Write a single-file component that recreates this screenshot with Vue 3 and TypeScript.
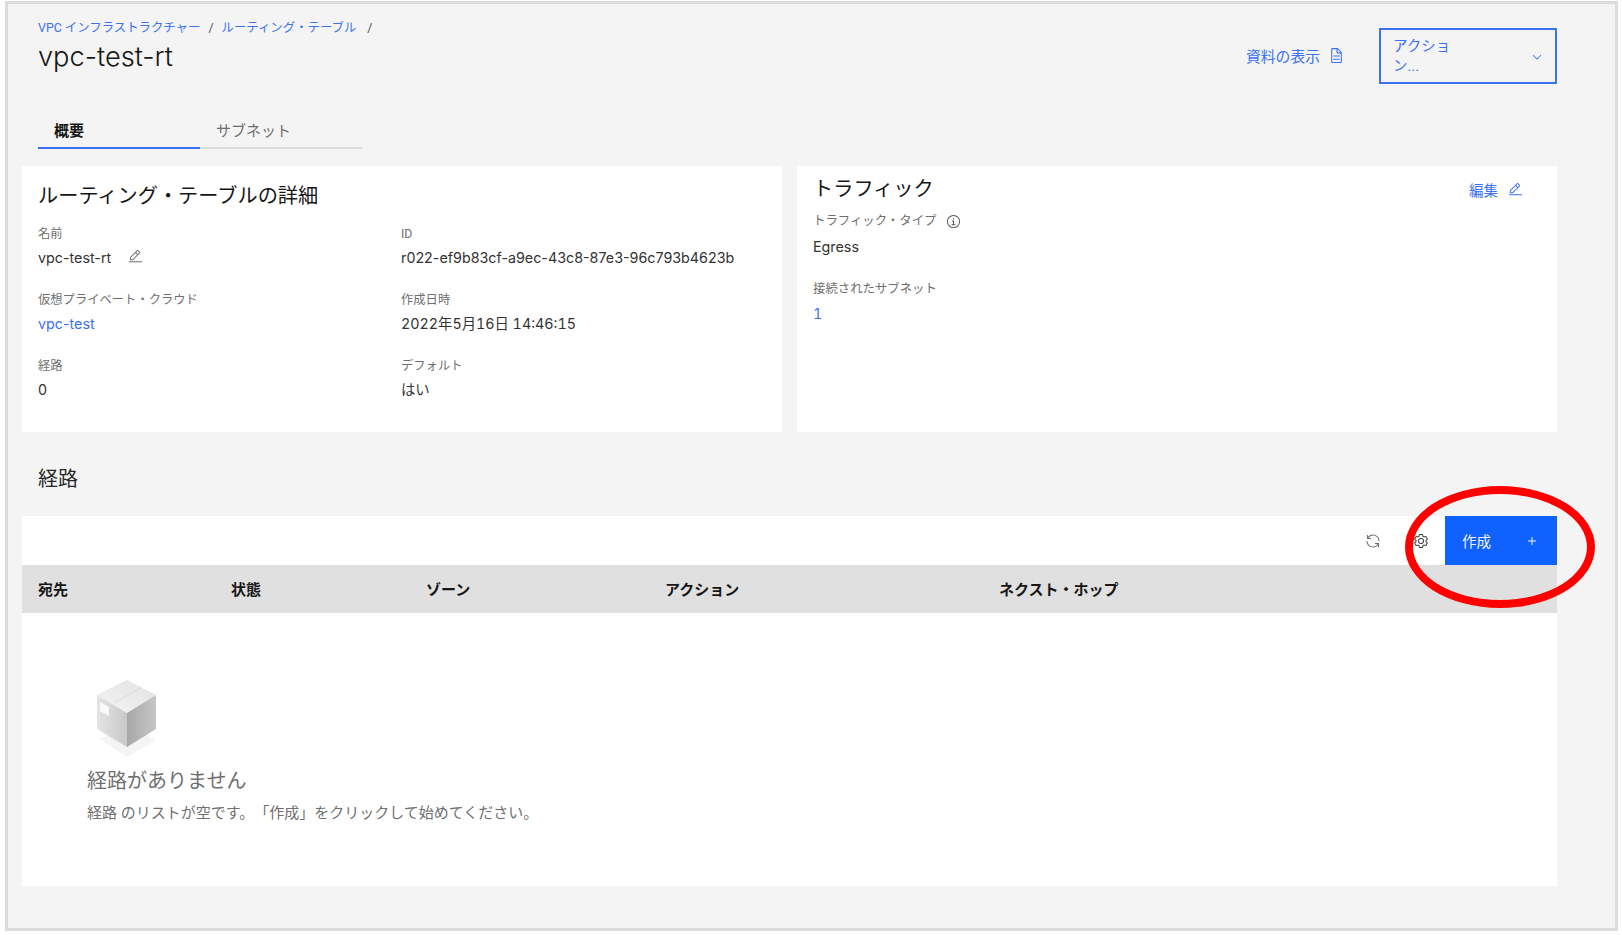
<script setup lang="ts">
interface Field {
  label: string
  value: string
  link?: boolean
  editable?: boolean
  tabular?: boolean
}

const detailFields: Field[] = [
  { label: '名前', value: 'vpc-test-rt', editable: true },
  { label: 'ID', value: 'r022-ef9b83cf-a9ec-43c8-87e3-96c793b4623b' },
  { label: '仮想プライベート・クラウド', value: 'vpc-test', link: true },
  { label: '作成日時', value: '2022年5月16日 14:46:15', tabular: true },
  { label: '経路', value: '0' },
  { label: 'デフォルト', value: 'はい' },
]

const columns = ['宛先', '状態', 'ゾーン', 'アクション', 'ネクスト・ホップ']

const editPath =
  'M2 26h28v2H2zM25.4 9c.8-.8.8-2 0-2.8l-3.6-3.6c-.8-.8-2-.8-2.8 0l-15 15V24h6.4l15-15zm-5-5L24 7.6l-3 3L17.4 7l3-3zM6 22v-3.6l10-10l3.6 3.6l-10 10H6z'
</script>

<template>
  <div class="frame">
    <header class="page-head">
      <div class="head-left">
        <nav class="breadcrumb">
          <a>VPC インフラストラクチャー</a>
          <span class="sep">/</span>
          <a>ルーティング・テーブル</a>
          <span class="sep">/</span>
        </nav>
        <h1 class="title">vpc-test-rt</h1>
      </div>
      <div class="head-right">
        <a class="doc-link">
          資料の表示
          <svg class="doc-icon" viewBox="0 0 32 32" fill="currentColor">
            <path d="M25.7 9.3l-7-7C18.5 2.1 18.3 2 18 2H8C6.9 2 6 2.9 6 4v24c0 1.1.9 2 2 2h16c1.1 0 2-.9 2-2V10C26 9.7 25.9 9.5 25.7 9.3zM18 4.4l5.6 5.6H18V4.4zM24 28H8V4h8v6c0 1.1.9 2 2 2h6V28z" />
            <path d="M10 22H22V24H10zM10 16H22V18H10z" />
          </svg>
        </a>
        <button class="action-select">
          <span class="action-text">アクション...</span>
          <svg class="chevron" viewBox="0 0 32 32" fill="currentColor">
            <path d="M16 22L6 12l1.4-1.4L16 19.2l8.6-8.6L26 12z" />
          </svg>
        </button>
      </div>
    </header>

    <div class="tabs">
      <div class="tab active">概要</div>
      <div class="tab">サブネット</div>
    </div>

    <section class="cards">
      <div class="card">
        <h2 class="card-title">ルーティング・テーブルの詳細</h2>
        <div class="field-grid">
          <div v-for="field in detailFields" :key="field.label" class="field">
            <div class="field-label">{{ field.label }}</div>
            <div class="field-value" :class="{ link: field.link, tabular: field.tabular }">
              {{ field.value }}
              <svg v-if="field.editable" class="edit-icon" viewBox="0 0 32 32" fill="currentColor">
                <path :d="editPath" />
              </svg>
            </div>
          </div>
        </div>
      </div>

      <div class="card traffic">
        <div class="traffic-head">
          <h2 class="card-title">トラフィック</h2>
          <a class="edit-link">
            編集
            <svg class="edit-link-icon" viewBox="0 0 32 32" fill="currentColor">
              <path :d="editPath" />
            </svg>
          </a>
        </div>
        <div class="field-label type-label">
          トラフィック・タイプ
          <svg class="info-icon" viewBox="0 0 32 32" fill="currentColor">
            <path d="M17 22v-8h-4v2h2v6h-3v2h8v-2h-3z" />
            <circle cx="16" cy="10" r="1.5" />
            <path d="M16 30A14 14 0 1 1 30 16 14 14 0 0 1 16 30zm0-26a12 12 0 1 0 12 12A12 12 0 0 0 16 4z" />
          </svg>
        </div>
        <div class="field-value egress">Egress</div>
        <div class="field-label subnet-label">接続されたサブネット</div>
        <div class="field-value link subnet-count tabular">1</div>
      </div>
    </section>

    <h2 class="section-title">経路</h2>

    <section class="routes">
      <div class="toolbar">
        <button class="tool-btn refresh">
          <svg viewBox="0 0 32 32" fill="currentColor">
            <path d="M12 10H6.78A11 11 0 0 1 27 16h2A13 13 0 0 0 6 7.68V4H4v8h8zM20 22h5.22A11 11 0 0 1 5 16H3a13 13 0 0 0 23 8.32V28h2v-8h-8z" />
          </svg>
        </button>
        <button class="tool-btn">
          <svg viewBox="0 0 32 32" fill="currentColor">
            <path d="M27,16.76c0-.25,0-.5,0-.76s0-.51,0-.77l1.92-1.68A2,2,0,0,0,29.3,11L26.94,7a2,2,0,0,0-1.73-1,2,2,0,0,0-.64.1l-2.43.82a11.35,11.35,0,0,0-1.31-.75l-.51-2.52a2,2,0,0,0-2-1.61H13.64a2,2,0,0,0-2,1.61l-.51,2.52a11.48,11.48,0,0,0-1.32.75L7.43,6.06A2,2,0,0,0,6.79,6,2,2,0,0,0,5.06,7L2.7,11a2,2,0,0,0,.41,2.51L5,15.24c0,.25,0,.5,0,.76s0,.51,0,.77L3.11,18.45A2,2,0,0,0,2.7,21L5.06,25a2,2,0,0,0,1.73,1,2,2,0,0,0,.64-.1l2.43-.82a11.35,11.35,0,0,0,1.31.75l.51,2.52a2,2,0,0,0,2,1.61h4.72a2,2,0,0,0,2-1.61l.51-2.52a11.48,11.48,0,0,0,1.32-.75l2.42.82a2,2,0,0,0,.64.1,2,2,0,0,0,1.73-1L29.3,21a2,2,0,0,0-.41-2.51ZM25.21,24l-3.43-1.16a8.86,8.86,0,0,1-2.71,1.57L18.36,28H13.64l-.71-3.55a9.36,9.36,0,0,1-2.7-1.57L6.79,24,4.43,20l2.72-2.4a8.9,8.9,0,0,1,0-3.13L4.43,12,6.79,8l3.43,1.16a8.86,8.86,0,0,1,2.71-1.57L13.64,4h4.72l.71,3.55a9.36,9.36,0,0,1,2.7,1.57L25.21,8,27.57,12l-2.72,2.4a8.9,8.9,0,0,1,0,3.13L27.57,20Z" />
            <path d="M16,22a6,6,0,1,1,6-6A5.94,5.94,0,0,1,16,22Zm0-10a3.91,3.91,0,0,0-4,4,3.91,3.91,0,0,0,4,4,3.91,3.91,0,0,0,4-4A3.91,3.91,0,0,0,16,12Z" />
          </svg>
        </button>
        <button class="create-btn">
          作成
          <svg viewBox="0 0 32 32" fill="currentColor">
            <path d="M17 15V8h-2v7H8v2h7v7h2v-7h7v-2h-7z" />
          </svg>
        </button>
      </div>

      <div class="table-head">
        <div v-for="col in columns" :key="col">{{ col }}</div>
      </div>

      <div class="empty">
        <svg class="box" viewBox="0 0 60 78" width="60" height="78">
          <defs>
            <linearGradient id="boxTop" x1="0" y1="1" x2="1" y2="0">
              <stop offset="0" stop-color="#f4f4f4" />
              <stop offset="1" stop-color="#e2e2e2" />
            </linearGradient>
            <linearGradient id="boxLeft" x1="0" y1="0" x2="1" y2="0">
              <stop offset="0" stop-color="#e4e4e4" />
              <stop offset="1" stop-color="#c8c8c8" />
            </linearGradient>
            <linearGradient id="boxRight" x1="0" y1="0" x2="1" y2="0">
              <stop offset="0" stop-color="#a8a8a8" />
              <stop offset="1" stop-color="#c6c6c6" />
            </linearGradient>
          </defs>
          <path d="M3 59L30 77L59 60L30 46z" fill="#f4f4f4" />
          <path d="M30 0L59 15L30 33L0 15z" fill="url(#boxTop)" />
          <path d="M0 15L30 33V67L0 49z" fill="url(#boxLeft)" />
          <path d="M59 15V49L30 67V33z" fill="url(#boxRight)" />
          <path d="M17 23L45 7" stroke="#d2d2d2" stroke-width="0.6" fill="none" />
          <path d="M3 22L12 27V36L3 31z" fill="#fafafa" />
        </svg>
        <h3 class="empty-title">経路がありません</h3>
        <p class="empty-text">経路 のリストが空です。「作成」をクリックして始めてください。</p>
      </div>

      <div class="callout"></div>
    </section>
  </div>
</template>

<style>
body {
  background: #fff;
}
</style>

<style scoped>
.frame {
  box-sizing: border-box;
  width: 1613px;
  height: 930px;
  margin: 1px 0 0 5px;
  padding: 0 58px 0 14px;
  border: 3px solid #dcdcdc;
  background: #f4f4f4;
  color: #262626;
  font-family: Roboto, "Noto Sans CJK JP", sans-serif;
  font-size: 15px;
}

a {
  color: #3b71f3;
}

.page-head {
  display: flex;
  justify-content: space-between;
  height: 108px;
  padding-left: 16px;
}

.breadcrumb {
  display: flex;
  align-items: center;
  height: 18px;
  margin-top: 15px;
  font-size: 12.4px;
  line-height: 18px;
}

.sep {
  margin: 0 8px;
  color: #525252;
}

.sep:last-child {
  margin-left: 11px;
}

.title {
  margin: 2px 0 0;
  font-family: Inter, "Noto Sans CJK JP", sans-serif;
  font-size: 27.2px;
  font-weight: 300;
  line-height: 36px;
  color: #161616;
}

.head-right {
  display: flex;
  align-items: flex-start;
  margin-top: 24px;
}

.doc-link {
  display: flex;
  align-items: center;
  height: 55px;
  margin-right: 34px;
  font-size: 14.8px;
}

.doc-icon {
  width: 17px;
  height: 17px;
  margin-left: 8px;
}

.action-select {
  display: flex;
  align-items: center;
  justify-content: space-between;
  box-sizing: border-box;
  width: 178px;
  height: 56px;
  padding: 2px 11px 0 12px;
  border: 2px solid #3b71f3;
  background: transparent;
  color: #3b71f3;
  font: inherit;
  font-size: 14.5px;
  line-height: 20px;
  text-align: left;
}

.action-text {
  width: 60px;
}

.chevron {
  width: 14px;
  height: 14px;
}

.tabs {
  display: flex;
  margin-left: 16px;
}

.tab {
  box-sizing: border-box;
  width: 162px;
  height: 37px;
  padding: 7px 0 0 16px;
  border-bottom: 2px solid #dddddd;
  color: #6f6f6f;
}

.tab.active {
  border-bottom-color: #3b71f3;
  color: #161616;
  font-weight: 600;
}

.cards {
  display: grid;
  grid-template-columns: 1fr 1fr;
  gap: 15px;
  height: 266px;
  margin-top: 17px;
}

.card {
  padding: 16px 16px 0;
  background: #fff;
}

.card-title {
  margin: 0;
  font-size: 20.2px;
  font-weight: 400;
  line-height: 28px;
  color: #161616;
}

.field-grid {
  display: grid;
  grid-template-columns: 363px 1fr;
  row-gap: 24px;
  margin-top: 16px;
}

.field-label {
  font-size: 12.3px;
  line-height: 16px;
  color: #6f6f6f;
}

.field-value {
  margin-top: 6px;
  font-family: Inter, "Noto Sans CJK JP", sans-serif;
  font-size: 14.3px;
  line-height: 20px;
  color: #333;
}

.tabular {
  font-variant-numeric: tabular-nums;
}

.link {
  color: #3b71f3;
}

.edit-icon {
  width: 15px;
  height: 15px;
  margin-left: 13px;
  color: #6f6f6f;
  vertical-align: -1px;
}

.traffic {
  padding-top: 9px;
}

.traffic-head {
  display: flex;
  justify-content: space-between;
  height: 29px;
  padding-right: 18px;
}

.edit-link {
  display: flex;
  align-items: center;
  height: 29px;
  font-size: 14.5px;
}

.edit-link-icon {
  width: 15px;
  height: 15px;
  margin-left: 10px;
}

.type-label {
  display: flex;
  align-items: center;
  margin-top: 9px;
  font-size: 12.4px;
}

.info-icon {
  width: 15px;
  height: 15px;
  margin-left: 10px;
  color: #525252;
}

.egress {
  margin-top: 8px;
}

.subnet-label {
  margin-top: 24px;
  font-size: 12.4px;
}

.subnet-count {
  margin-top: 7px;
}

.section-title {
  margin: 33px 0 23px 16px;
  font-size: 20px;
  font-weight: 400;
  line-height: 28px;
  color: #262626;
}

.routes {
  position: relative;
}

.toolbar {
  display: flex;
  justify-content: flex-end;
  height: 49px;
  background: #fff;
}

.tool-btn {
  display: flex;
  align-items: center;
  justify-content: center;
  width: 48px;
  padding: 0;
  border: 0;
  background: none;
  color: #393939;
}

.tool-btn.refresh {
  color: #6f6f6f;
}

.tool-btn svg {
  width: 16px;
  height: 16px;
}

.create-btn {
  display: flex;
  align-items: center;
  justify-content: space-between;
  box-sizing: border-box;
  width: 112px;
  padding: 0 17px;
  border: 0;
  background: #0f62fe;
  color: #f2f6ff;
  font: inherit;
  font-size: 14.5px;
}

.create-btn svg {
  width: 16px;
  height: 16px;
}

.table-head {
  display: grid;
  grid-template-columns: 193px 195px 239px 334px 1fr;
  align-items: center;
  box-sizing: border-box;
  height: 48px;
  padding: 0 0 2px 16px;
  background: #e0e0e0;
  color: #161616;
  font-weight: 600;
}

.empty {
  box-sizing: border-box;
  height: 273px;
  padding: 67px 0 0 65px;
  background: #fff;
}

.box {
  display: block;
  margin-left: 10px;
}

.empty-title {
  margin: 9px 0 0;
  font-size: 20px;
  font-weight: 400;
  line-height: 28px;
  color: #6f6f6f;
}

.empty-text {
  margin: 8px 0 0;
  font-size: 15px;
  line-height: 20px;
  color: #6f6f6f;
  text-spacing-trim: space-all;
}

.callout {
  position: absolute;
  top: -30px;
  left: 1383px;
  box-sizing: border-box;
  width: 190px;
  height: 122px;
  border: 8px solid #ff0000;
  border-radius: 50%;
  pointer-events: none;
}
</style>
